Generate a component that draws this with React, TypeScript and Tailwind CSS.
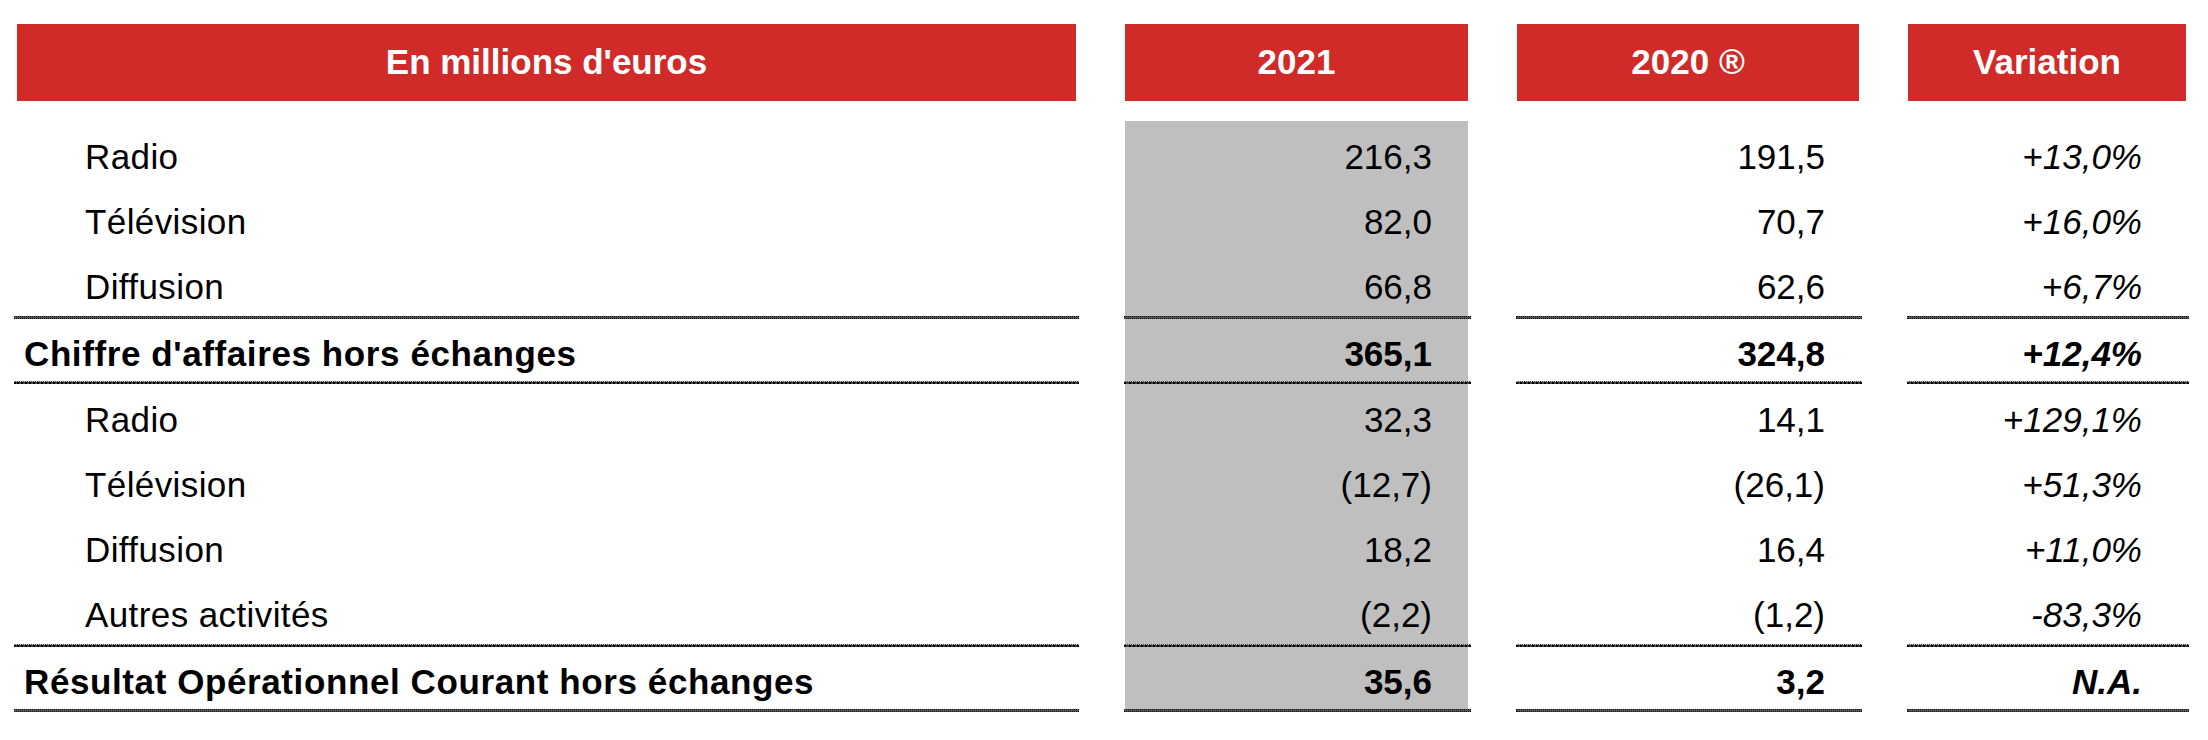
import React from "react";

type Row = {
  label: string;
  y21: string;
  y20: string;
  v: string;
  total?: boolean;
};

const firstBlock: Row[] = [
  { label: "Radio", y21: "216,3", y20: "191,5", v: "+13,0%" },
  { label: "Télévision", y21: "82,0", y20: "70,7", v: "+16,0%" },
  { label: "Diffusion", y21: "66,8", y20: "62,6", v: "+6,7%" },
];

const secondBlock: Row[] = [
  { label: "Radio", y21: "32,3", y20: "14,1", v: "+129,1%" },
  { label: "Télévision", y21: "(12,7)", y20: "(26,1)", v: "+51,3%" },
  { label: "Diffusion", y21: "18,2", y20: "16,4", v: "+11,0%" },
  { label: "Autres activités", y21: "(2,2)", y20: "(1,2)", v: "-83,3%" },
];

const grid = "grid grid-cols-[1059px_343px_342px_278px] gap-x-[49px]";

function Line({ dark }: { dark?: boolean }) {
  const cls = dark
    ? "h-[3px] bg-[#444] border-t border-dotted border-t-[#bbb] border-b-2 border-b-black"
    : "h-[3px] bg-[#555] border-t border-b border-dotted border-[#111]";
  return (
    <div className={grid}>
      <div className="-ml-[3px] -mr-[3px]">
        <div className={cls} />
      </div>
      <div className="bg-[#bfbfbf]">
        <div className={`${cls} -ml-[1px] -mr-[3px]`} />
      </div>
      <div className="-ml-[1px] -mr-[3px]">
        <div className={cls} />
      </div>
      <div className="-ml-[1px] -mr-[3px]">
        <div className={cls} />
      </div>
    </div>
  );
}

function DataRow({ row }: { row: Row }) {
  const h = row.total ? "h-[62px] pt-[6px]" : "h-[65px] pt-[5px]";
  const weight = row.total ? "font-bold" : "font-normal";
  return (
    <div className={`${grid} text-[35px] text-black leading-none`}>
      <div
        className={`${h} flex items-center ${
          row.total ? "pl-[7px] tracking-[0.6px]" : "pl-[68px] tracking-[0.4px]"
        } ${weight}`}
      >
        {row.label}
      </div>
      <div className={`${h} flex items-center justify-end pr-[36px] bg-[#bfbfbf] ${weight}`}>
        {row.y21}
      </div>
      <div className={`${h} flex items-center justify-end pr-[34px] ${weight}`}>
        {row.y20}
      </div>
      <div className={`${h} flex items-center justify-end pr-[44px] italic ${weight}`}>
        {row.v}
      </div>
    </div>
  );
}

export default function App() {
  return (
    <div
      className="w-[2208px] h-[740px] bg-white pl-[17px] pt-[24px] overflow-hidden"
      style={{ fontFamily: "'Liberation Sans', Arial, sans-serif" }}
    >
      {/* Header */}
      <div className={`${grid} h-[77px] text-white font-bold text-[35px]`}>
        <div className="bg-[#d02b29] flex items-center justify-center">En millions d'euros</div>
        <div className="bg-[#d02b29] flex items-center justify-center">2021</div>
        <div className="bg-[#d02b29] flex items-center justify-center">2020 ®</div>
        <div className="bg-[#d02b29] flex items-center justify-center">Variation</div>
      </div>

      <div className="h-[20px]" />

      {firstBlock.map((r, i) => (
        <DataRow key={"a" + i} row={r} />
      ))}
      <Line />
      <DataRow row={{ label: "Chiffre d'affaires hors échanges", y21: "365,1", y20: "324,8", v: "+12,4%", total: true }} />
      <Line dark />
      {secondBlock.map((r, i) => (
        <DataRow key={"b" + i} row={r} />
      ))}
      <Line dark />
      <DataRow row={{ label: "Résultat Opérationnel Courant hors échanges", y21: "35,6", y20: "3,2", v: "N.A.", total: true }} />
      <Line />
    </div>
  );
}
